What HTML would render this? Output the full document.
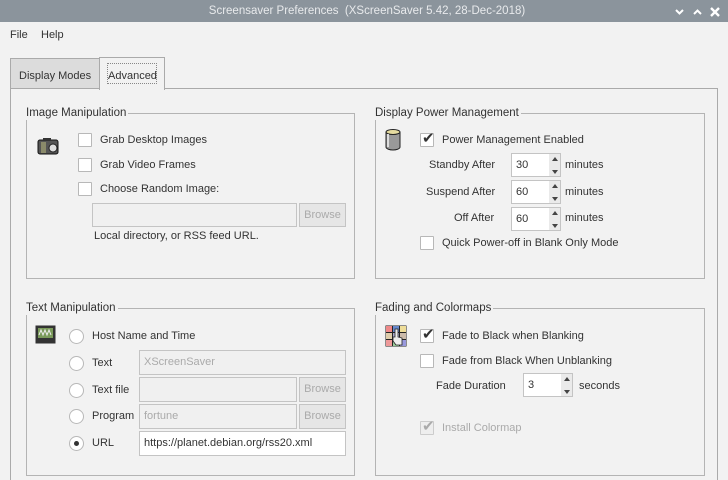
<!DOCTYPE html>
<html><head><meta charset="utf-8"><style>
*{box-sizing:border-box;margin:0;padding:0}
html,body{width:728px;height:480px;overflow:hidden}
body{background:#f2f2f2;font-family:"Liberation Sans",sans-serif;font-size:11px;color:#333;position:relative}
.a{position:absolute}
.t{position:absolute;white-space:nowrap;line-height:14px}
.box{position:absolute;border:1px solid #b4b4b4}
.lbl{position:absolute;top:-8px;left:-1px;background:#f2f2f2;padding-right:2px;line-height:14px;white-space:nowrap;font-size:11.5px}
.cb{position:absolute;width:14px;height:14px;border:1px solid #b8b8b8;background:#fff;border-radius:1px}
.rd{position:absolute;width:15px;height:15px;border:1px solid #b8b8b8;background:#fff;border-radius:50%}
.in{position:absolute;border:1px solid #c4c4c4;background:#f0f0f0;color:#aaa;padding-left:4px;line-height:22px;white-space:nowrap}
.wh{background:#fff;color:#333}
.br{position:absolute;border:1px solid #c4c4c4;background:#e6e6e6;color:#aaa;text-align:center;line-height:22px}
.sp{position:absolute;width:12px;border:1px solid #c4c4c4;border-left:none;background:#eaeaea}
.chk{position:absolute;left:1px;top:-3px;font-size:15px;line-height:16px;color:#333}
</style></head><body>
<div class="a" style="left:0;top:0;width:728px;height:22px;background:#8b949c"></div>
<div class="t" style="left:0;width:728px;text-align:center;top:4px;color:#e8eaec;padding-left:6px;font-size:11.5px">Screensaver Preferences&nbsp; (XScreenSaver 5.42, 28-Dec-2018)</div>
<svg class="a" style="left:672px;top:6px" width="56" height="12" viewBox="0 0 56 12"><path d="M4 4l3.5 3.5L11 4M22 8l3.5-3.5L29 8" stroke="#fff" stroke-width="2" fill="none"/><path d="M39 2l8 8M47 2l-8 8" stroke="#fff" stroke-width="2.4"/></svg>
<div class="t" style="left:10px;top:28px">File</div>
<div class="t" style="left:41px;top:28px">Help</div>

<div class="a" style="left:10px;top:88px;width:708px;height:400px;border:1px solid #aaa"></div>
<div class="a" style="left:10px;top:58px;width:90px;height:31px;border:1px solid #aaa;background:#dcdcdc"></div>
<div class="t" style="left:19px;top:69px">Display Modes</div>
<div class="a" style="left:99px;top:57px;width:66px;height:33px;border:1px solid #aaa;border-bottom:none;background:#f2f2f2"></div>
<div class="a" style="left:107px;top:63px;width:50px;height:21px;border:1px dotted #888"></div>
<div class="t" style="left:108px;top:69px">Advanced</div>

<div class="box" style="left:26px;top:113px;width:329px;height:166px"><div class="lbl">Image Manipulation</div></div>
<svg class="a" style="left:37px;top:137px" width="24" height="19" viewBox="0 0 24 19"><rect x="1" y="3" width="20" height="14" rx="2" fill="#555" stroke="#111"/><rect x="4" y="5" width="5" height="11" fill="#8a8a6a"/><circle cx="16" cy="11" r="4" fill="#ddd" stroke="#222"/><rect x="6" y="1" width="8" height="3" fill="#333"/></svg>
<div class="cb" style="left:78px;top:133px"></div><div class="t" style="left:100px;top:133px">Grab Desktop Images</div>
<div class="cb" style="left:78px;top:158px"></div><div class="t" style="left:100px;top:158px">Grab Video Frames</div>
<div class="cb" style="left:78px;top:182px"></div><div class="t" style="left:100px;top:182px">Choose Random Image:</div>
<div class="in" style="left:92px;top:203px;width:205px;height:24px"></div>
<div class="br" style="left:299px;top:203px;width:47px;height:24px">Browse</div>
<div class="t" style="left:94px;top:229px">Local directory, or RSS feed URL.</div>

<div class="box" style="left:375px;top:113px;width:330px;height:166px"><div class="lbl">Display Power Management</div></div>
<svg class="a" style="left:384px;top:128px" width="22" height="23" viewBox="0 0 22 23"><path d="M2 4v15c0 2 4 3 7 3s7-1 7-3V4" fill="#999" stroke="#222"/><ellipse cx="9" cy="4" rx="7" ry="2.5" fill="#e6dca0" stroke="#222"/><path d="M4 6v13" stroke="#ddd" stroke-width="2"/></svg>
<div class="cb" style="left:420px;top:133px"><span class="chk">✔</span></div><div class="t" style="left:442px;top:133px">Power Management Enabled</div>
<div class="t" style="left:429px;top:158px">Standby After</div>
<div class="in wh" style="left:511px;top:153px;width:39px;height:24px">30</div><div class="sp" style="left:549px;top:153px;height:24px"></div>
<div class="t" style="left:565px;top:158px">minutes</div>
<div class="t" style="left:426px;top:185px">Suspend After</div>
<div class="in wh" style="left:511px;top:180px;width:39px;height:24px">60</div><div class="sp" style="left:549px;top:180px;height:24px"></div>
<div class="t" style="left:565px;top:185px">minutes</div>
<div class="t" style="left:454px;top:211px">Off After</div>
<div class="in wh" style="left:511px;top:207px;width:39px;height:24px">60</div><div class="sp" style="left:549px;top:207px;height:24px"></div>
<div class="t" style="left:565px;top:211px">minutes</div>
<div class="cb" style="left:420px;top:236px"></div><div class="t" style="left:442px;top:236px">Quick Power-off in Blank Only Mode</div>

<div class="box" style="left:26px;top:308px;width:329px;height:168px"><div class="lbl">Text Manipulation</div></div>
<svg class="a" style="left:35px;top:325px" width="21" height="19" viewBox="0 0 21 19"><rect x="0.5" y="0.5" width="20" height="18" fill="#333"/><rect x="3" y="3" width="15" height="10" fill="#7a9a5a"/><path d="M4 10l2-5 2 5 2-5 2 5 2-5 2 5" stroke="#eee" fill="none"/></svg>
<div class="rd" style="left:69px;top:329px"></div><div class="t" style="left:92px;top:329px">Host Name and Time</div>
<div class="rd" style="left:69px;top:356px"></div><div class="t" style="left:92px;top:356px">Text</div>
<div class="in" style="left:139px;top:350px;width:207px;height:25px">XScreenSaver</div>
<div class="rd" style="left:69px;top:383px"></div><div class="t" style="left:92px;top:383px">Text file</div>
<div class="in" style="left:139px;top:377px;width:158px;height:25px"></div>
<div class="br" style="left:299px;top:377px;width:47px;height:25px">Browse</div>
<div class="rd" style="left:69px;top:409px"></div><div class="t" style="left:92px;top:409px">Program</div>
<div class="in" style="left:139px;top:404px;width:158px;height:25px">fortune</div>
<div class="br" style="left:299px;top:404px;width:47px;height:25px">Browse</div>
<div class="rd" style="left:69px;top:436px"><div class="a" style="left:4px;top:4px;width:5px;height:5px;border-radius:50%;background:#333"></div></div><div class="t" style="left:92px;top:436px">URL</div>
<div class="in wh" style="left:139px;top:431px;width:207px;height:25px">https://planet.debian.org/rss20.xml</div>

<div class="box" style="left:375px;top:308px;width:330px;height:168px"><div class="lbl">Fading and Colormaps</div></div>
<svg class="a" style="left:385px;top:325px" width="22" height="22" viewBox="0 0 22 22"><rect x="0.5" y="0.5" width="21" height="21" fill="#222"/><rect x="1" y="1" width="6" height="6" fill="#e88"/><rect x="8" y="1" width="6" height="6" fill="#68c"/><rect x="15" y="1" width="6" height="6" fill="#ed9"/><rect x="1" y="8" width="6" height="6" fill="#dca"/><rect x="8" y="8" width="6" height="6" fill="#aac"/><rect x="15" y="8" width="6" height="6" fill="#cba"/><rect x="1" y="15" width="6" height="6" fill="#e99"/><rect x="8" y="15" width="6" height="6" fill="#9c9"/><rect x="15" y="15" width="6" height="6" fill="#99d"/><path d="M10 4v8h-2v4l3 4h6v-7l-4-1V4z" fill="#eee" stroke="#222" stroke-width="0.8"/></svg>
<div class="cb" style="left:420px;top:329px"><span class="chk">✔</span></div><div class="t" style="left:442px;top:329px">Fade to Black when Blanking</div>
<div class="cb" style="left:420px;top:354px"></div><div class="t" style="left:442px;top:354px">Fade from Black When Unblanking</div>
<div class="t" style="left:436px;top:379px">Fade Duration</div>
<div class="in wh" style="left:523px;top:373px;width:39px;height:24px">3</div><div class="sp" style="left:561px;top:373px;height:24px"></div>
<div class="t" style="left:579px;top:379px">seconds</div>
<div class="cb" style="left:420px;top:421px;background:#eee;border-color:#ccc"><span class="chk" style="color:#aaa">✔</span></div><div class="t" style="left:442px;top:421px;color:#aaa">Install Colormap</div>

<svg class="a" style="left:549px;top:153px" width="12" height="80" viewBox="0 0 12 80"><g fill="#444"><path d="M3 8l3-4 3 4zM3 17l3 4 3-4zM3 35l3-4 3 4zM3 44l3 4 3-4zM3 62l3-4 3 4zM3 71l3 4 3-4z"/></g></svg>
<svg class="a" style="left:561px;top:373px" width="12" height="24" viewBox="0 0 12 24"><path d="M3 8l3-4 3 4zM3 17l3 4 3-4z" fill="#444"/></svg>
</body></html>
